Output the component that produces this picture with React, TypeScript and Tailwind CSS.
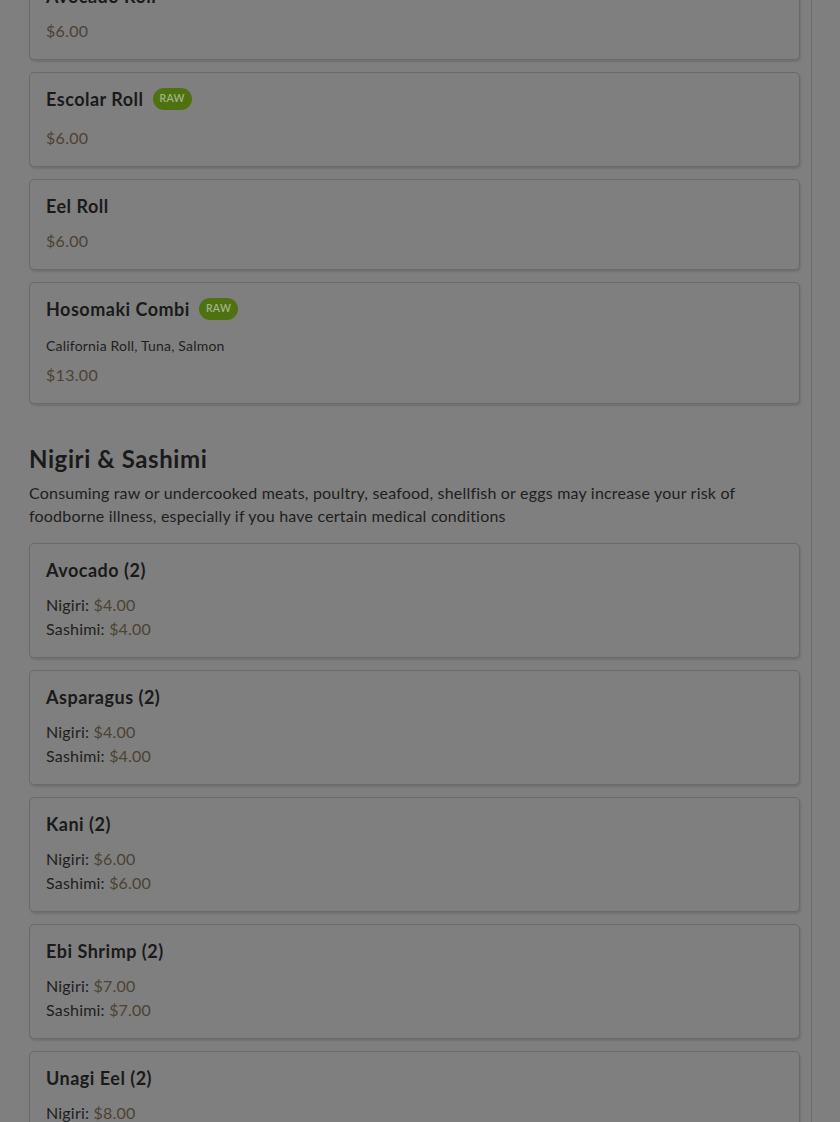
import React from 'react';

type Roll = { name: string; price: string; raw?: boolean; desc?: string };
type Piece = { name: string; nigiri: string; sashimi: string };

const rolls: Roll[] = [
  { name: 'Avocado Roll', price: '$6.00' },
  { name: 'Escolar Roll', price: '$6.00', raw: true },
  { name: 'Eel Roll', price: '$6.00' },
  { name: 'Hosomaki Combi', price: '$13.00', raw: true, desc: 'California Roll, Tuna, Salmon' },
];

const pieces: Piece[] = [
  { name: 'Avocado (2)', nigiri: '$4.00', sashimi: '$4.00' },
  { name: 'Asparagus (2)', nigiri: '$4.00', sashimi: '$4.00' },
  { name: 'Kani (2)', nigiri: '$6.00', sashimi: '$6.00' },
  { name: 'Ebi Shrimp (2)', nigiri: '$7.00', sashimi: '$7.00' },
  { name: 'Unagi Eel (2)', nigiri: '$8.00', sashimi: '$8.00' },
];

function RawBadge() {
  return (
    <span className="ml-[9px] mt-[-1px] mb-[4px] inline-flex h-[22px] items-center rounded-full bg-[#4f7210] px-[7px] text-[10.5px] font-semibold tracking-[0.3px] text-[#a3b38a]">
      RAW
    </span>
  );
}

function Card({ children }: { children: React.ReactNode }) {
  return (
    <div className="rounded-[5px] border border-[#6a6a6a] bg-[#7f7f7f] px-4 py-4 shadow-[1px_2px_2px_rgba(0,0,0,0.12)]">
      {children}
    </div>
  );
}

function RollCard({ item }: { item: Roll }) {
  return (
    <Card>
      <div className="mb-3 flex items-start">
        <h3 className="text-[18px] font-bold leading-[21px] tracking-[0.5px] text-[#1a1a1a]">{item.name}</h3>
        {item.raw && <RawBadge />}
      </div>
      {item.desc && <p className="mb-[7px] text-[14px] leading-5 tracking-[0.2px] text-[#1e1e1e]">{item.desc}</p>}
      <p className="text-[16px] leading-6 tracking-[0.3px] text-[#4d4233]">{item.price}</p>
    </Card>
  );
}

function PieceCard({ item }: { item: Piece }) {
  return (
    <Card>
      <h3 className="mb-3 text-[18px] font-bold leading-[21px] tracking-[0.5px] text-[#1a1a1a]">{item.name}</h3>
      <p className="text-[16px] leading-6 tracking-[0.2px] text-[#1e1e1e]">
        Nigiri: <span className="text-[#4d4233]">{item.nigiri}</span>
      </p>
      <p className="text-[16px] leading-6 tracking-[0.2px] text-[#1e1e1e]">
        Sashimi: <span className="text-[#4d4233]">{item.sashimi}</span>
      </p>
    </Card>
  );
}

export default function App() {
  return (
    <div
      className="flex h-[1122px] w-full overflow-hidden bg-[#7f7f7f]"
      style={{ fontFamily: 'Lato, "Noto Sans", sans-serif' }}
    >
      <main className="w-[812px] shrink-0 border-r border-[#6c6c6c] pl-[29px] pr-[11px]">
        {/* Rolls (scrolled past the top) */}
        <section className="mt-[-31px] flex flex-col gap-3">
          {rolls.map((r) => (
            <RollCard key={r.name} item={r} />
          ))}
        </section>

        {/* Nigiri & Sashimi */}
        <section className="mt-10">
          <h2 className="mb-2 text-[24px] font-bold leading-[29px] tracking-[0.6px] text-[#1a1a1a]">Nigiri &amp; Sashimi</h2>
          <p className="mb-4 max-w-[760px] text-[16px] leading-[23px] tracking-[0.2px] text-[#1e1e1e]">
            Consuming raw or undercooked meats, poultry, seafood, shellfish or eggs may increase your risk of
            foodborne illness, especially if you have certain medical conditions
          </p>
          <div className="flex flex-col gap-3">
            {pieces.map((p) => (
              <PieceCard key={p.name} item={p} />
            ))}
          </div>
        </section>
      </main>
      <div className="flex-1" />
    </div>
  );
}
